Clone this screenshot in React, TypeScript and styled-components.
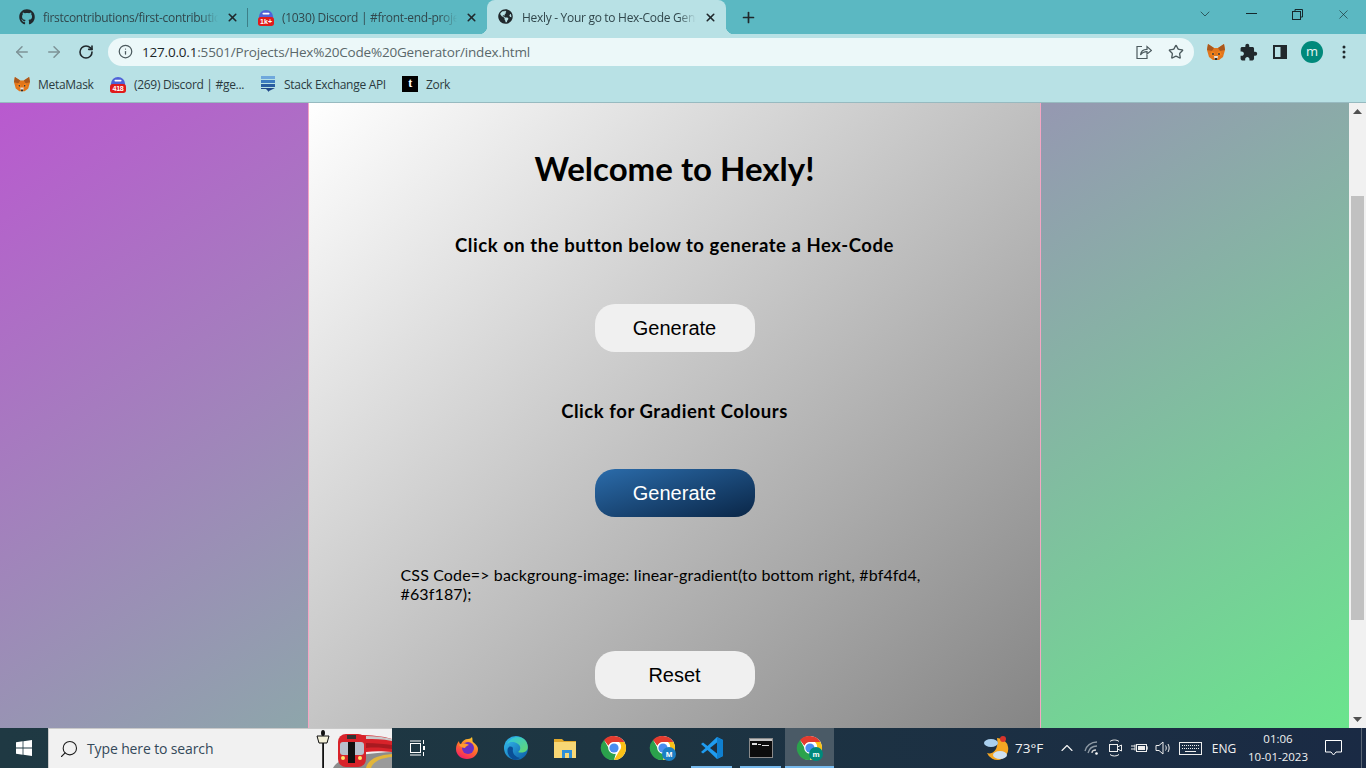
import styled, { createGlobalStyle } from 'styled-components'
import { ArrowLeft, ArrowRight, RotateCw, Info, Star, X, Plus, ChevronDown, ChevronUp, Search } from 'lucide-react'
import { FaGithub, FaGlobeAmericas } from 'react-icons/fa'
import { MdExtension } from 'react-icons/md'

const GlobalStyle = createGlobalStyle`
  html, body {
    margin: 0;
    height: 100%;
    overflow: hidden;
  }
  * {
    box-sizing: border-box;
  }
`

const Screen = styled.div`
  width: 1366px;
  height: 768px;
  display: flex;
  flex-direction: column;
  overflow: hidden;
  font-family: 'Open Sans', 'Liberation Sans', sans-serif;
`

/* browser chrome */
const TabStrip = styled.div`
  height: 34px;
  background: #5bb8c2;
  display: flex;
  align-items: stretch;
  flex-shrink: 0;
`

const Tab = styled.div<{ $active?: boolean; $width: number; $divider?: boolean; $inset: number }>`
  position: relative;
  width: ${(p) => p.$width}px;
  display: flex;
  align-items: center;
  gap: 8px;
  padding: 0 9px 0 ${(p) => p.$inset}px;
  background: ${(p) => (p.$active ? '#b8e1e5' : 'transparent')};
  border-radius: ${(p) => (p.$active ? '8px 8px 0 0' : '0')};

  ${(p) =>
    p.$active &&
    `
    &::before, &::after {
      content: '';
      position: absolute;
      bottom: 0;
      width: 8px;
      height: 8px;
    }
    &::before {
      left: -8px;
      background: radial-gradient(circle at 0 0, transparent 8px, #b8e1e5 8.5px);
    }
    &::after {
      right: -8px;
      background: radial-gradient(circle at 100% 0, transparent 8px, #b8e1e5 8.5px);
    }
  `}

  ${(p) =>
    p.$divider &&
    `
    &::after {
      content: '';
      position: absolute;
      right: 0;
      top: 8px;
      height: 19px;
      width: 1px;
      background: #3d7f88;
    }
  `}
`

const TabTitle = styled.span`
  flex: 1;
  min-width: 0;
  white-space: nowrap;
  overflow: hidden;
  font-size: 12px;
  letter-spacing: -0.3px;
  color: #31474c;
  -webkit-mask-image: linear-gradient(to right, #000 90%, transparent 100%);
  mask-image: linear-gradient(to right, #000 90%, transparent 100%);
`

const TabFavicon = styled.span`
  width: 16px;
  height: 16px;
  display: flex;
  flex-shrink: 0;
  color: #20282c;
`

const TabClose = styled(X)`
  width: 13px;
  height: 13px;
  flex-shrink: 0;
  color: #20282c;
  stroke-width: 3;
`

const NewTab = styled.div`
  width: 44px;
  display: flex;
  align-items: center;
  justify-content: center;
  color: #20282c;
`

const StripSpacer = styled.div`
  flex: 1;
`

const WindowButton = styled.div`
  width: 46px;
  display: flex;
  align-items: center;
  justify-content: center;
  color: #16282c;
  padding-bottom: 6px;
`

const ToolbarRow = styled.div`
  height: 36px;
  background: #b8e1e5;
  display: flex;
  align-items: center;
  padding: 0 0 0 6px;
  flex-shrink: 0;
`

const NavButton = styled.div<{ $dim?: boolean }>`
  width: 32px;
  height: 28px;
  display: flex;
  align-items: center;
  justify-content: center;
  color: ${(p) => (p.$dim ? '#7d9296' : '#20282c')};
`

const Omnibox = styled.div`
  width: 1086px;
  height: 28px;
  margin-left: 6px;
  margin-right: 6px;
  background: #ecf8f9;
  border-radius: 14px;
  display: flex;
  align-items: center;
  padding: 0 2px 0 10px;
`

const OmniIcon = styled.div`
  width: 16px;
  height: 16px;
  display: flex;
  color: #4c5a5e;
  flex-shrink: 0;
`

const UrlText = styled.div`
  flex: 1;
  margin-left: 8px;
  font-size: 13.5px;
  letter-spacing: -0.19px;
  color: #5a686b;
  white-space: nowrap;

  b {
    font-weight: 400;
    color: #1b2629;
  }
`

const OmniAction = styled.div`
  width: 32px;
  display: flex;
  justify-content: center;
  color: #4c5a5e;
`

const Avatar = styled.div`
  width: 22px;
  height: 22px;
  border-radius: 50%;
  background: #00897b;
  color: #e8f5f3;
  font-size: 13px;
  line-height: 20px;
  text-align: center;
`

const BookmarkBar = styled.div`
  height: 33px;
  background: #b8e1e5;
  border-bottom: 1px solid #97bac0;
  display: flex;
  align-items: flex-start;
  padding: 4px 0 0 14px;
  flex-shrink: 0;
`

const Bookmark = styled.div<{ $width: number }>`
  width: ${(p) => p.$width}px;
  height: 20px;
  display: flex;
  align-items: center;
  gap: 8px;
  font-size: 12px;
  letter-spacing: -0.3px;
  color: #2b3b3f;
  white-space: nowrap;
`

const BookmarkIcon = styled.div`
  width: 16px;
  height: 16px;
  display: flex;
  flex-shrink: 0;
`

const TumblrBox = styled.div`
  width: 16px;
  height: 16px;
  background: #000;
  color: #fff;
  font: 700 12px/15px 'Liberation Serif', serif;
  text-align: center;
`

/* the page itself */
const Viewport = styled.div`
  height: 625px;
  display: flex;
  flex-shrink: 0;
`

// the document is taller than the window and scrolled a bit, so the gradient box is too
const Page = styled.div`
  flex: 1;
  min-width: 0;
  overflow: hidden;
  background: linear-gradient(to bottom right, #bf4fd4, #63f187) no-repeat 0 -110px / 100% 869px;
`

const Card = styled.main`
  width: 733px;
  height: 625px;
  margin: 0 auto;
  border-left: 1px solid #f4a6c4;
  border-right: 1px solid #f4a6c4;
  background: linear-gradient(to bottom right, #ffffff, #808080) no-repeat 0 0 / 100% 680px;
  display: flex;
  flex-direction: column;
  align-items: center;
  font-family: 'Lato', 'Liberation Sans', sans-serif;
  color: #000;
`

const Title = styled.h1`
  margin: 45px 0 0;
  height: 40px;
  font-size: 33px;
  line-height: 40px;
  font-weight: 700;
`

const Lead = styled.p<{ $top: number }>`
  margin: ${(p) => p.$top}px 0 0;
  font-size: 18.5px;
  line-height: 24px;
  font-weight: 700;
  letter-spacing: 0.55px;
`

const ActionButton = styled.button<{ $top: number; $primary?: boolean }>`
  width: 160px;
  height: 48px;
  margin-top: ${(p) => p.$top}px;
  border: 0;
  border-radius: 20px;
  font-family: 'Liberation Sans', Arial, sans-serif;
  font-size: 20px;
  color: ${(p) => (p.$primary ? '#fff' : '#000')};
  background: ${(p) => (p.$primary ? 'linear-gradient(to bottom right, #2b6cab, #0a2647)' : '#f0f0f0')};
`

const CodeLine = styled.p`
  width: 548px;
  margin: 48px 0 0;
  font-size: 16px;
  letter-spacing: 0.14px;
  line-height: 19px;
  color: #000;
`

const Scrollbar = styled.div`
  width: 17px;
  background: #f1f1f1;
  display: flex;
  flex-direction: column;
  align-items: center;
  flex-shrink: 0;
`

const ScrollArrow = styled.div`
  height: 17px;
  display: flex;
  align-items: center;
  justify-content: center;
`

const ScrollThumb = styled.div`
  width: 13px;
  height: 424px;
  margin-top: 76px;
  background: #c1c1c1;
`

const ScrollGap = styled.div`
  flex: 1;
`

/* windows taskbar */
const Taskbar = styled.footer`
  height: 40px;
  flex-shrink: 0;
  background: linear-gradient(to right, #1f3943, #1d3542 45%, #1a2a44);
  display: flex;
  align-items: stretch;
  color: #fff;
`

const StartButton = styled.div`
  width: 48px;
  display: flex;
  align-items: center;
  justify-content: center;
`

const SearchBox = styled.div`
  position: relative;
  width: 344px;
  background: #f1f1f1;
  border: 1px solid #c9c9c9;
  border-width: 1px 0 0 1px;
  display: flex;
  align-items: center;
  padding-left: 10px;
  gap: 8px;
  overflow: hidden;
  color: #1d1d1d;
`

const SearchGlass = styled(Search)`
  transform: scaleX(-1);
`

const SearchText = styled.span`
  font-size: 14px;
  letter-spacing: -0.13px;
  color: #34495a;
`

const TrainArt = styled.svg`
  position: absolute;
  right: 0;
  top: 0;
`

const TaskSlot = styled.div<{ $active?: boolean; $running?: boolean }>`
  position: relative;
  width: 49px;
  display: flex;
  align-items: center;
  justify-content: center;
  background: ${(p) => (p.$active ? '#4a5a66' : 'transparent')};

  ${(p) =>
    p.$running &&
    `
    &::after {
      content: '';
      position: absolute;
      bottom: 0;
      left: ${p.$active ? 0 : 4}px;
      right: ${p.$active ? 0 : 4}px;
      height: 2px;
      background: #76b9ed;
    }
  `}
`

const TaskApps = styled.div`
  display: flex;
  margin-left: 1px;
`

const Tray = styled.div`
  flex: 1;
  display: flex;
  align-items: center;
  justify-content: flex-end;
  font-size: 12px;
  color: #f2f2f2;
`

const TrayItem = styled.div<{ $width: number }>`
  width: ${(p) => p.$width}px;
  display: flex;
  align-items: center;
  justify-content: center;
`

const Temp = styled.span`
  width: 43px;
  padding-left: 4px;
  font-size: 13.5px;
`

const Clock = styled.div`
  width: 72px;
  text-align: center;
  font-size: 11.5px;
  line-height: 18px;
`

const DesktopEdge = styled.div`
  width: 5px;
  align-self: stretch;
  border-left: 1px solid #5a6675;
`

const FoxIcon = () => (
  <svg width="18" height="17" viewBox="0 0 18 17">
    <polygon points="1,0 7,4 11,4 17,0 18,6 16,13 12,16 6,16 2,13 0,6" fill="#e2761b" />
    <polygon points="1,0 7,4 5,7 0,6" fill="#a9581d" />
    <polygon points="17,0 11,4 13,7 18,6" fill="#a9581d" />
    <polygon points="5,7 8,9 7,12 3,11" fill="#f6851b" />
    <polygon points="13,7 10,9 11,12 15,11" fill="#f6851b" />
    <polygon points="7,12 11,12 10.5,15 7.5,15" fill="#e4e1dc" />
    <polygon points="7.6,14 10.4,14 10,16 8,16" fill="#2b2b2b" />
    <circle cx="6" cy="10" r="0.9" fill="#233447" />
    <circle cx="12" cy="10" r="0.9" fill="#233447" />
  </svg>
)

const BadgeText = styled.text`
  font-family: 'Liberation Sans', sans-serif;
  font-weight: 700;
  font-size: 8px;
  fill: #fff;
`

const DiscordIcon = ({ label }: { label: string }) => (
  <svg width="18" height="18" viewBox="0 0 18 18">
    <circle cx="9" cy="8" r="8" fill="#4e62d8" />
    <rect x="5" y="3" width="8" height="2" rx="1" fill="#fff" />
    <rect y="8" width="18" height="10" rx="3" fill="#e01b1b" />
    <BadgeText x="9" y="16" textAnchor="middle">
      {label}
    </BadgeText>
  </svg>
)

const StackIcon = () => (
  <svg width="16" height="16" viewBox="0 0 16 16">
    <rect x="1" y="0" width="14" height="3" fill="#6fa8dc" />
    <rect x="1" y="4" width="14" height="3" fill="#3d7cc0" />
    <rect x="1" y="8" width="14" height="3" fill="#2a5ea0" />
    <polygon points="1,12 15,12 9,15 9,16 6,13 1,13" fill="#1f4788" />
  </svg>
)

const ShareIcon = () => (
  <svg width="16" height="16" viewBox="0 0 16 16" fill="none" stroke="#4c5a5e" strokeWidth="1.2">
    <path d="M6 2.5H1v12h10V11" />
    <path d="M4.5 11c.4-3.6 3-5.6 6.5-5.6V2.6L15.5 6.5 11 10V7.6C8.5 7.6 6 8.6 4.5 11z" />
  </svg>
)

const PanelIcon = () => (
  <svg width="14" height="14" viewBox="0 0 14 14">
    <rect x="1" y="1" width="12" height="12" fill="none" stroke="#20282c" strokeWidth="2" />
    <rect x="7.5" y="1" width="5.5" height="12" fill="#20282c" />
  </svg>
)

const DotsIcon = () => (
  <svg width="4" height="14" viewBox="0 0 4 14" fill="#20282c">
    <circle cx="2" cy="2" r="1.5" />
    <circle cx="2" cy="7" r="1.5" />
    <circle cx="2" cy="12" r="1.5" />
  </svg>
)

const WindowsLogo = () => (
  <svg width="16" height="16" viewBox="0 0 16 16" fill="#fff">
    <polygon points="0,2.3 6.6,1.3 6.6,7.5 0,7.5" />
    <polygon points="7.4,1.2 16,0 16,7.5 7.4,7.5" />
    <polygon points="0,8.4 6.6,8.4 6.6,14.7 0,13.7" />
    <polygon points="7.4,8.4 16,8.4 16,16 7.4,14.8" />
  </svg>
)

const Train = () => (
  <TrainArt width="80" height="39" viewBox="0 0 80 39">
    <rect x="10.200" y="10" width="1.800" height="29" fill="#111" />
    <ellipse cx="11" cy="4" rx="2" ry="3" fill="#111" />
    <path d="M5 7h12l-2 7H7z" fill="#f3f0d8" stroke="#111" />
    <path d="M21 39 C26 30 40 25 80 23 V39z" fill="#8c8c8c" />
    <path d="M54 39 C56 30 66 26 80 25 V39z" fill="#e2b53a" />
    <path d="M59 39 C61 33 68 29 80 28 V39z" fill="#9a9a9a" />
    <path d="M46 6 C60 6 70 7 80 10 V23 C70 22 62 22 54 23z" fill="#d8232a" />
    <path d="M54 7 C64 7 72 8 80 10 V12 C70 10 62 10 54 10z" fill="#c9c9c9" />
    <path d="M54 14 C64 14 72 15 80 16 V20 C72 19 64 18 54 19z" fill="#a81a20" />
    <rect x="26" y="5" width="28" height="33" rx="8" fill="#d8232a" />
    <rect x="28" y="13" width="24" height="13" rx="3" fill="#b9c0cc" />
    <rect x="36" y="13" width="7" height="21" fill="#111" />
    <circle cx="31" cy="29" r="2" fill="#ffe66b" />
    <circle cx="48" cy="29" r="2" fill="#ffe66b" />
    <rect x="35" y="6" width="9" height="4" fill="#333" />
  </TrainArt>
)

const TaskViewIcon = () => (
  <svg width="16" height="16" viewBox="0 0 16 16" fill="none" stroke="#fff">
    <rect x="0.5" y="3.5" width="10" height="9" />
    <path d="M0 1h11M0 15h11M13.5 0v4M13.5 12v4" />
    <rect x="13" y="6" width="2" height="4" fill="#fff" stroke="none" />
  </svg>
)

const FirefoxIcon = () => (
  <svg width="24" height="24" viewBox="0 0 24 24">
    <defs>
      <linearGradient id="ffo" x1="0.7" y1="0" x2="0.2" y2="1">
        <stop offset="0" stopColor="#ffcb2f" />
        <stop offset="0.5" stopColor="#ff6b2c" />
        <stop offset="1" stopColor="#f5156c" />
      </linearGradient>
    </defs>
    <path d="M17 1c1 3 0 4 1 5 3 2 5 5 5 7 0 6-5 10-11 10S1 19 1 13c0-3 1-6 3-8 0 2 1 3 2 3 1-3 4-5 7-5 2 0 3-1 4-2z" fill="url(#ffo)" />
    <circle cx="13" cy="12" r="6" fill="#6b2fc4" />
    <path d="M4 9c3-2 7-2 10 0-2 1-3 1-4 3-2 0-5-1-6-3z" fill="#ff9a2e" />
  </svg>
)

const EdgeIcon = () => (
  <svg width="24" height="24" viewBox="0 0 24 24">
    <defs>
      <linearGradient id="edg" x1="0" y1="0" x2="1" y2="1">
        <stop offset="0" stopColor="#35c1f1" />
        <stop offset="1" stopColor="#0c59a4" />
      </linearGradient>
      <linearGradient id="edg2" x1="0" y1="0" x2="1" y2="1">
        <stop offset="0" stopColor="#2cc4e8" />
        <stop offset="1" stopColor="#66d96a" />
      </linearGradient>
    </defs>
    <circle cx="12" cy="12" r="12" fill="url(#edg)" />
    <path d="M3 8C6 1 15-1 20 3c3 2 5 8 3 11-2 3-7 3-9 2 3-2 3-6 0-8-4-3-9-2-11 0z" fill="url(#edg2)" />
    <path d="M9 13c-1 4 2 8 7 9-2 1-3 2-5 2C6 23 2 17 4 12c1-2 5-2 5 1z" fill="#0a4f96" />
  </svg>
)

const FolderIcon = () => (
  <svg width="24" height="22" viewBox="0 0 24 22">
    <path d="M1 2h8l2 2h12v3H1z" fill="#e2a92c" />
    <rect x="1" y="5" width="22" height="16" fill="#f8d775" />
    <rect x="9" y="13" width="10" height="8" fill="#2f8fd8" />
    <rect x="12" y="16" width="4" height="5" fill="#f8d775" />
  </svg>
)

const ChromeIcon = ({ badge, badgeColor }: { badge?: string; badgeColor?: string }) => (
  <svg width="28" height="28" viewBox="-2 -2 28 28">
    <circle cx="12" cy="12" r="12" fill="#fff" />
    <path d="M12 0a12 12 0 0 1 10.4 6H12a6 6 0 0 0-5.6 3.8L2 4a12 12 0 0 1 10-4z" fill="#e33b2e" />
    <path d="M22.4 6A12 12 0 0 1 12 24l5.2-9A6 6 0 0 0 17 6z" fill="#fbc116" />
    <path d="M12 24A12 12 0 0 1 2 4l5.2 9a6 6 0 0 0 6.6 4.7z" fill="#2ba24c" />
    <circle cx="12" cy="12" r="5.8" fill="#fff" />
    <circle cx="12" cy="12" r="4.6" fill="#4a8df0" />
    {badge && (
      <>
        <circle cx="18" cy="18" r="7" fill={badgeColor} />
        <BadgeText x="18" y="21" textAnchor="middle">
          {badge}
        </BadgeText>
      </>
    )}
  </svg>
)

const VsCodeIcon = () => (
  <svg width="24" height="24" viewBox="0 0 24 24">
    <path d="M17 1l6 3v16l-6 3L7.500 14l-4.500 3.500-2-1.500 4.500-4-4.500-4 2-1.500L7.500 10z" fill="#1f9cf0" />
    <path d="M17 6.500v11L10 12z" fill="#1f2f3e" />
    <path d="M17 1l6 3v16l-6 3z" fill="#0f7fcf" />
  </svg>
)

const CmdIcon = () => (
  <svg width="24" height="20" viewBox="0 0 24 20">
    <rect x="0.5" y="0.500" width="23" height="19" fill="#0c0c0c" stroke="#8a8a8a" />
    <rect x="1" y="1" width="22" height="2" fill="#c4c4c4" />
    <rect x="3" y="5" width="5" height="2" fill="#ddd" />
    <rect x="9" y="6" width="3" height="1" fill="#ddd" />
    <rect x="13" y="7" width="7" height="1" fill="#ddd" />
  </svg>
)

const WeatherIcon = () => (
  <svg width="26" height="26" viewBox="0 0 26 26">
    <path d="M14 3a11 11 0 1 1-10 15c6 2 12-4 10-15z" fill="#f5a623" />
    <ellipse cx="8" cy="8" rx="7" ry="4" fill="#a9cfee" />
    <ellipse cx="17" cy="20" rx="7" ry="4" fill="#cfe1f2" />
    <circle cx="20" cy="4" r="3" fill="#d9342b" />
  </svg>
)

const WifiIcon = () => (
  <svg width="16" height="14" viewBox="0 0 16 14" fill="none" stroke="#8e9aa5" strokeWidth="1.300">
    <path d="M1 10C2 5 7 1 13 1" />
    <path d="M4 12C5 8 8 5 13 5" />
    <path d="M8 12c0-2 2-3 4-3" stroke="#d9d9d9" />
    <circle cx="12.500" cy="12.500" r="1.300" fill="#fff" stroke="none" />
  </svg>
)

const MeetIcon = () => (
  <svg width="16" height="18" viewBox="0 0 16 18" fill="none" stroke="#eee">
    <rect x="2.500" y="5.500" width="8" height="7" />
    <path d="M10.500 8l4-2v6l-4-2M3 2.500C5 0.500 10 0.500 12 2.500M3 15.500c2 2 7 2 9 0" />
  </svg>
)

const BatteryIcon = () => (
  <svg width="17" height="12" viewBox="0 0 17 12" fill="none" stroke="#eee">
    <rect x="5.500" y="2.500" width="10" height="7" />
    <rect x="7" y="4" width="7" height="4" fill="#eee" stroke="none" />
    <path d="M0 4h4M0 7h4M4 2.500v6M15.500 5h1.500v2h-1.500" />
  </svg>
)

const VolumeIcon = () => (
  <svg width="17" height="14" viewBox="0 0 17 14" fill="none" stroke="#eee">
    <path d="M1 4.500h3L8 1v12L4 9.500H1z" />
    <path d="M10.500 4.500c1 1.500 1 3.500 0 5M13 3c1.500 2.500 1.500 5.500 0 8" />
  </svg>
)

const KeyboardIcon = () => (
  <svg width="23" height="13" viewBox="0 0 23 13" fill="none" stroke="#eee">
    <rect x="0.500" y="0.500" width="22" height="12" />
    <path d="M3 3.500h17M3 6.500h17" strokeDasharray="1 1" />
    <path d="M6 9.500h11" />
  </svg>
)

const NotifyIcon = () => (
  <svg width="17" height="16" viewBox="0 0 17 16" fill="none" stroke="#fff">
    <path d="M0.500 0.500h16v11.500h-5.500l-2.500 3-2.500-3h-5.500z" />
  </svg>
)

const App = () => {
  return (
    <Screen>
      <GlobalStyle />
      <TabStrip>
        <Tab $width={248} $inset={19} $divider>
          <TabFavicon>
            <FaGithub size={16} />
          </TabFavicon>
          <TabTitle>firstcontributions/first-contributions</TabTitle>
          <TabClose />
        </Tab>
        <Tab $width={239} $inset={10}>
          <TabFavicon>
            <DiscordIcon label="1k+" />
          </TabFavicon>
          <TabTitle>(1030) Discord | #front-end-projects</TabTitle>
          <TabClose />
        </Tab>
        <Tab $width={239} $inset={11} $active>
          <TabFavicon>
            <FaGlobeAmericas size={15} />
          </TabFavicon>
          <TabTitle>Hexly - Your go to Hex-Code Generator</TabTitle>
          <TabClose />
        </Tab>
        <NewTab>
          <Plus size={17} strokeWidth={2.4} />
        </NewTab>
        <StripSpacer />
        <WindowButton>
          <ChevronDown size={16} strokeWidth={1} />
        </WindowButton>
        <WindowButton>
          <svg width="11" height="2">
            <rect width="11" height="1" fill="#16282c" />
          </svg>
        </WindowButton>
        <WindowButton>
          <svg width="11" height="11" viewBox="0 0 11 11" fill="none" stroke="#16282c">
            <rect x="0.500" y="2.500" width="8" height="8" />
            <path d="M3 2V0.500h7.500V8H9" />
          </svg>
        </WindowButton>
        <WindowButton>
          <X size={15} strokeWidth={1} />
        </WindowButton>
      </TabStrip>

      <ToolbarRow>
        <NavButton $dim>
          <ArrowLeft size={18} />
        </NavButton>
        <NavButton $dim>
          <ArrowRight size={18} />
        </NavButton>
        <NavButton>
          <RotateCw size={16} strokeWidth={2.4} />
        </NavButton>
        <Omnibox>
          <OmniIcon>
            <Info size={15} />
          </OmniIcon>
          <UrlText>
            <b>127.0.0.1</b>:5501/Projects/Hex%20Code%20Generator/index.html
          </UrlText>
          <OmniAction>
            <ShareIcon />
          </OmniAction>
          <OmniAction>
            <Star size={16} />
          </OmniAction>
        </Omnibox>
        <NavButton>
          <FoxIcon />
        </NavButton>
        <NavButton>
          <MdExtension size={19} />
        </NavButton>
        <NavButton>
          <PanelIcon />
        </NavButton>
        <NavButton>
          <Avatar>m</Avatar>
        </NavButton>
        <NavButton>
          <DotsIcon />
        </NavButton>
      </ToolbarRow>

      <BookmarkBar>
        <Bookmark $width={96}>
          <BookmarkIcon>
            <FoxIcon />
          </BookmarkIcon>
          MetaMask
        </Bookmark>
        <Bookmark $width={150}>
          <BookmarkIcon>
            <DiscordIcon label="418" />
          </BookmarkIcon>
          (269) Discord | #ge...
        </Bookmark>
        <Bookmark $width={142}>
          <BookmarkIcon>
            <StackIcon />
          </BookmarkIcon>
          Stack Exchange API
        </Bookmark>
        <Bookmark $width={60}>
          <TumblrBox>t</TumblrBox>
          Zork
        </Bookmark>
      </BookmarkBar>

      <Viewport>
        <Page>
          <Card>
            <Title>Welcome to Hexly!</Title>
            <Lead $top={45}>Click on the button below to generate a Hex-Code</Lead>
            <ActionButton $top={47}>Generate</ActionButton>
            <Lead $top={47}>Click for Gradient Colours</Lead>
            <ActionButton $top={46} $primary>
              Generate
            </ActionButton>
            <CodeLine>
              CSS Code=&gt; backgroung-image: linear-gradient(to bottom right, #bf4fd4, #63f187);
            </CodeLine>
            <ActionButton $top={48}>Reset</ActionButton>
          </Card>
        </Page>
        <Scrollbar>
          <ScrollArrow>
            <svg width="9" height="5" viewBox="0 0 9 5">
              <polygon points="4.500,0 9,5 0,5" fill="#505050" />
            </svg>
          </ScrollArrow>
          <ScrollThumb />
          <ScrollGap />
          <ScrollArrow>
            <svg width="9" height="5" viewBox="0 0 9 5">
              <polygon points="0,0 9,0 4.500,5" fill="#505050" />
            </svg>
          </ScrollArrow>
        </Scrollbar>
      </Viewport>

      <Taskbar>
        <StartButton>
          <WindowsLogo />
        </StartButton>
        <SearchBox>
          <SearchGlass size={20} strokeWidth={1.3} />
          <SearchText>Type here to search</SearchText>
          <Train />
        </SearchBox>
        <TaskApps>
          <TaskSlot>
            <TaskViewIcon />
          </TaskSlot>
          <TaskSlot>
            <FirefoxIcon />
          </TaskSlot>
          <TaskSlot>
            <EdgeIcon />
          </TaskSlot>
          <TaskSlot>
            <FolderIcon />
          </TaskSlot>
          <TaskSlot>
            <ChromeIcon />
          </TaskSlot>
          <TaskSlot>
            <ChromeIcon badge="M" badgeColor="#1b7fc4" />
          </TaskSlot>
          <TaskSlot $running>
            <VsCodeIcon />
          </TaskSlot>
          <TaskSlot $running>
            <CmdIcon />
          </TaskSlot>
          <TaskSlot $running $active>
            <ChromeIcon badge="m" badgeColor="#00897b" />
          </TaskSlot>
        </TaskApps>
        <Tray>
          <TrayItem $width={30}>
            <WeatherIcon />
          </TrayItem>
          <Temp>73°F</Temp>
          <TrayItem $width={26}>
            <ChevronUp size={20} strokeWidth={1.4} />
          </TrayItem>
          <TrayItem $width={24}>
            <WifiIcon />
          </TrayItem>
          <TrayItem $width={22}>
            <MeetIcon />
          </TrayItem>
          <TrayItem $width={26}>
            <BatteryIcon />
          </TrayItem>
          <TrayItem $width={22}>
            <VolumeIcon />
          </TrayItem>
          <TrayItem $width={32}>
            <KeyboardIcon />
          </TrayItem>
          <TrayItem $width={36}>ENG</TrayItem>
          <Clock>
            01:06
            <br />
            10-01-2023
          </Clock>
          <TrayItem $width={38}>
            <NotifyIcon />
          </TrayItem>
          <TrayItem $width={9} />
          <DesktopEdge />
        </Tray>
      </Taskbar>
    </Screen>
  )
}

export default App
